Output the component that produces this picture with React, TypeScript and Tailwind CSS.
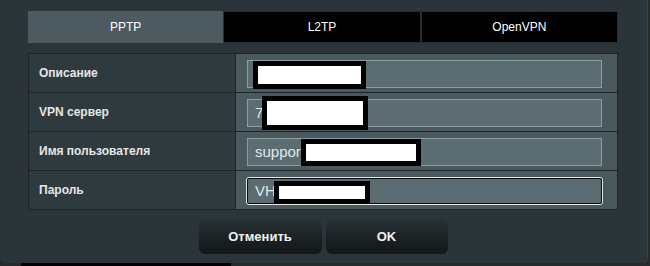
const tabs = ['PPTP', 'L2TP', 'OpenVPN'];

interface Row {
  label: string;
  value: string;
  focused?: boolean;
  mask: { left: string; top: string; w: string; h: string };
}

const rows: Row[] = [
  { label: 'Описание', value: '', mask: { left: 'left-[5px]', top: 'top-0', w: 'w-[113px]', h: 'h-[28px]' } },
  { label: 'VPN сервер', value: '7', mask: { left: 'left-[14px]', top: 'top-[-4px]', w: 'w-[106px]', h: 'h-[34px]' } },
  { label: 'Имя пользователя', value: 'suppor', mask: { left: 'left-[53px]', top: 'top-0', w: 'w-[120px]', h: 'h-[27px]' } },
  { label: 'Пароль', value: 'VH', focused: true, mask: { left: 'left-[27px]', top: 'top-[3px]', w: 'w-[96px]', h: 'h-[23px]' } },
];

const App = () => {
  return (
    <div className="w-[650px] h-[266px] bg-[#262a2b] overflow-hidden font-['Liberation_Sans',Arial,sans-serif]">
      <div className="h-[263px] w-[648px] bg-[#2b3539] rounded-b-[6px] border-r border-[#3b464a] pt-[11px] pl-[28px]">
        {/* tabs */}
        <div className="flex w-[590px] h-[32px] text-[12px] text-white">
          {tabs.map((t, i) => (
            <div
              key={t}
              className={`flex-1 flex items-center justify-center ${
                i === 0 ? 'bg-[#4d5a5f]' : 'bg-black border border-[#2a2d2e]'
              }`}
            >
              {t}
            </div>
          ))}
        </div>

        {/* form table */}
        <div className="mt-[10px] w-[590px] border border-[#1e2528]">
          {rows.map((r, i) => (
            <div
              key={r.label}
              className={`flex h-[38px] ${i < rows.length - 1 ? 'border-b border-[#1e2528]' : ''} box-content`}
            >
              <div className="w-[207px] shrink-0 bg-[#2f3a3e] border-r border-[#1e2528] flex items-center pl-[10px] text-[12px] font-bold text-[#e6e6e6]">
                {r.label}
              </div>
              <div className="flex-1 bg-[#4a595e] pl-[11px] pt-[6px]">
                {r.focused ? (
                  <div className="relative ml-[-1px] w-[357px] h-[28px] rounded-[3px] border border-[#e8e8e8] bg-[#5b6d72]">
                    <div className="absolute inset-0 rounded-[2px] border border-[#0d0d0d]" />
                    <div className="absolute left-[8px] top-0 h-full flex items-center text-[15px] text-[#e2e6e7]">{r.value}</div>
                    <div className={`absolute ${r.mask.left} ${r.mask.top} ${r.mask.w} ${r.mask.h} bg-white border-[5px] border-black`} />
                  </div>
                ) : (
                  <div className="relative w-[355px] h-[28px] border border-[#8c9ca0] bg-[#5b6d72]">
                    <div className="absolute left-[7px] top-0 h-full flex items-center text-[15px] text-[#e2e6e7]">{r.value}</div>
                    <div className={`absolute ${r.mask.left} ${r.mask.top} ${r.mask.w} ${r.mask.h} bg-white border-[5px] border-black`} />
                  </div>
                )}
              </div>
            </div>
          ))}
        </div>

        {/* buttons */}
        <div className="flex justify-center gap-[4px] w-[590px] mt-[10px]">
          <button className="w-[123px] h-[34px] rounded-[6px] bg-gradient-to-b from-[#263034] to-[#121617] text-[13px] font-bold text-[#f0f0f0]">
            Отменить
          </button>
          <button className="w-[122px] h-[34px] rounded-[6px] bg-gradient-to-b from-[#263034] to-[#121617] text-[13px] font-bold text-[#f0f0f0]">
            OK
          </button>
        </div>
      </div>
      <div className="ml-[21px] w-[210px] h-[3px] bg-black" />
    </div>
  );
};

export default App;
